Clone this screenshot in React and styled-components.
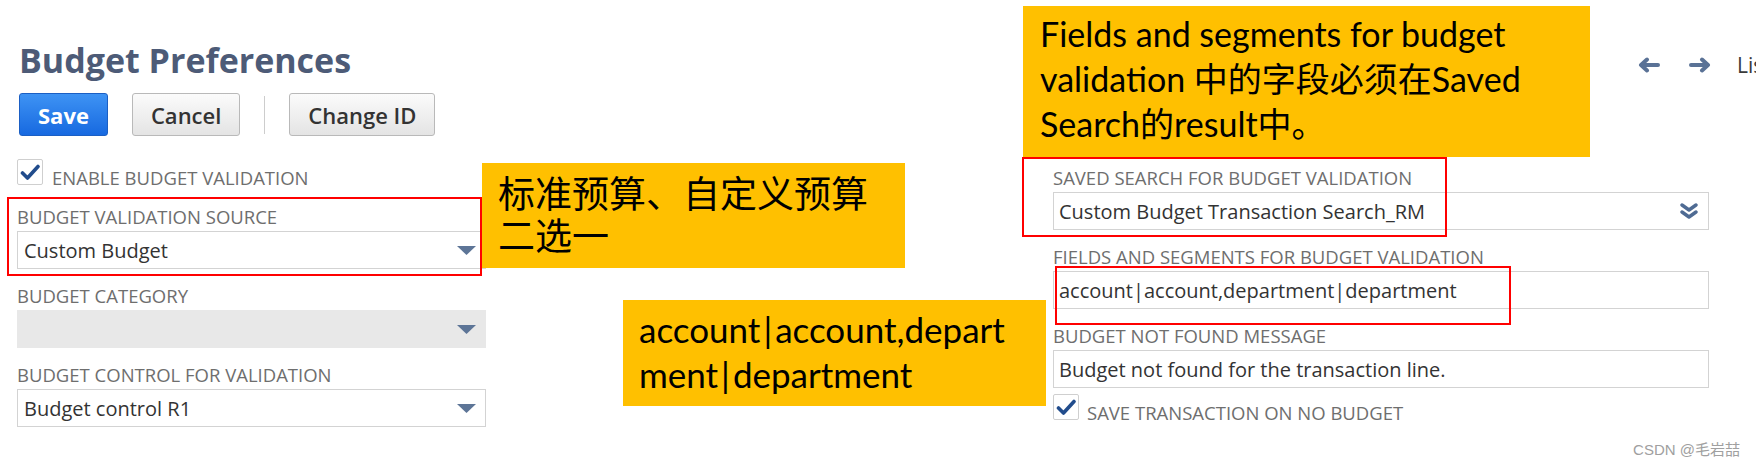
import React from "react";
import styled, { createGlobalStyle } from "styled-components";

const GlobalStyle = createGlobalStyle`
  html, body {
    margin: 0;
    padding: 0;
    background: #fff;
  }
  body {
    font-family: "Open Sans", "Noto Sans CJK SC", sans-serif;
    overflow: hidden;
  }
`;

const Page = styled.div`
  position: relative;
  width: 1756px;
  height: 467px;
  padding-top: 40px;
  box-sizing: border-box;
  overflow: hidden;
`;

const Header = styled.div`
  padding-left: 19px;
`;

const TitleRow = styled.div`
  display: flex;
  align-items: center;
  height: 40px;
`;

const Title = styled.h1`
  flex: none;
  width: 1619px;
  margin: 0;
  font-size: 34px;
  line-height: 40px;
  font-weight: 700;
  color: #4d5b77;
`;

const Nav = styled.div`
  display: flex;
  align-items: center;
  margin-top: 9px;
  white-space: nowrap;
`;

const NavArrow = styled.span`
  display: flex;
  margin-right: ${(p) => p.$gap}px;
`;

const NavLink = styled.span`
  font-size: 21px;
  line-height: 24px;
  color: #3a3a3a;
`;

const ButtonBar = styled.div`
  display: flex;
  align-items: center;
  gap: 24px;
  margin-top: 13px;
`;

const Button = styled.button`
  height: 43px;
  padding: 0 18px;
  box-sizing: border-box;
  border-radius: 3px;
  font-family: "Open Sans", sans-serif;
  font-size: 22px;
  cursor: pointer;
  border: 1px solid ${(p) => (p.$primary ? "#1b5fc4" : "#b9b9b9")};
  color: ${(p) => (p.$primary ? "#fff" : "#333")};
  background: ${(p) =>
    p.$primary
      ? "linear-gradient(#3e93f4, #1769e0)"
      : "linear-gradient(#fbfbfb, #e4e4e4)"};
  font-weight: ${(p) => (p.$primary ? 700 : 600)};
`;

const Divider = styled.span`
  width: 1px;
  height: 38px;
  background: #cdcdcd;
`;

const Columns = styled.div`
  display: grid;
  grid-template-columns: 469px 656px;
  column-gap: 567px;
  align-items: start;
  padding-left: 17px;
  margin-top: 23px;
`;

const Column = styled.div`
  display: flex;
  flex-direction: column;
  padding-top: ${(p) => p.$offset || 0}px;
`;

const CheckRow = styled.label`
  display: flex;
  align-items: flex-end;
  gap: ${(p) => p.$gap}px;
  height: 26px;
  margin-bottom: ${(p) => p.$after || 0}px;
`;

const Box = styled.span`
  flex: none;
  display: flex;
  align-items: center;
  justify-content: center;
  width: 26px;
  height: 26px;
  box-sizing: border-box;
  border: 1px solid #cfcfcf;
  border-radius: 2px;
  background: #fff;
`;

const CheckText = styled.span`
  font-size: 18.5px;
  line-height: 22px;
  margin-bottom: -4px;
  color: #6e6e6e;
  white-space: nowrap;
`;

const Field = styled.div`
  display: flex;
  flex-direction: column;
  gap: 3px;
  margin-bottom: ${(p) => (p.$tight ? 6 : 16)}px;
`;

const FieldLabel = styled.div`
  font-size: 18.5px;
  line-height: 22px;
  color: #6e6e6e;
  white-space: nowrap;
`;

const Control = styled.div`
  display: flex;
  align-items: center;
  justify-content: space-between;
  height: 38px;
  box-sizing: border-box;
  padding: 0 9px 0 ${(p) => p.$pad || 6}px;
  border: 1px solid ${(p) => (p.$disabled ? "#e8e8e8" : "#d3d3d3")};
  background: ${(p) => (p.$disabled ? "#e8e8e8" : "#fff")};
  font-size: 20px;
  color: #333;
  white-space: nowrap;
`;

const Highlight = styled.div`
  position: absolute;
  left: ${(p) => p.$x}px;
  top: ${(p) => p.$y}px;
  width: ${(p) => p.$w}px;
  height: ${(p) => p.$h}px;
  box-sizing: border-box;
  border: 2px solid #f00;
  pointer-events: none;
`;

const Callout = styled.div`
  position: absolute;
  left: ${(p) => p.$x}px;
  top: ${(p) => p.$y}px;
  width: ${(p) => p.$w}px;
  height: ${(p) => p.$h}px;
  box-sizing: border-box;
  padding: ${(p) => p.$padTop}px 0 0 ${(p) => p.$padLeft}px;
  background: #ffc000;
  color: #000;
  font-family: "Lato", "Noto Sans CJK SC", sans-serif;
  font-size: ${(p) => p.$size}px;
  line-height: ${(p) => p.$lh}px;
  white-space: nowrap;
`;

const Pipe = styled.span`
  margin: 0 3px;
`;

const Watermark = styled.div`
  position: absolute;
  right: 16px;
  bottom: 8px;
  font-family: "Liberation Sans", "Noto Sans CJK SC", sans-serif;
  font-size: 15px;
  color: #a0a0a0;
`;

function Check() {
  return (
    <Box>
      <svg width="20" height="17" viewBox="0 0 20 17">
        <path
          d="M2.5 9 L7.5 14 L18 2.5"
          fill="none"
          stroke="#214c8c"
          strokeWidth="3.6"
          strokeLinecap="round"
          strokeLinejoin="round"
        />
      </svg>
    </Box>
  );
}

function Caret() {
  return (
    <svg width="19" height="9" viewBox="0 0 19 9">
      <path d="M0 0 H19 L9.5 9 Z" fill="#5d7597" />
    </svg>
  );
}

function DoubleChevron() {
  return (
    <svg width="20" height="16" viewBox="0 0 20 16">
      <path
        d="M3 2 L10 7 L17 2 M3 9 L10 14 L17 9"
        fill="none"
        stroke="#4f6b93"
        strokeWidth="3.4"
        strokeLinecap="round"
        strokeLinejoin="round"
      />
    </svg>
  );
}

function Arrow({ dir }) {
  const d =
    dir === "left"
      ? "M9 2.5 L3 8 L9 13.5 M3.5 8 H20"
      : "M13 2.5 L19 8 L13 13.5 M18.5 8 H2";
  return (
    <svg width="22" height="16" viewBox="0 0 22 16">
      <path
        d={d}
        fill="none"
        stroke="#5a7296"
        strokeWidth="4"
        strokeLinecap="round"
        strokeLinejoin="round"
      />
    </svg>
  );
}

export default function App() {
  return (
    <Page>
      <GlobalStyle />
      <Header>
        <TitleRow>
          <Title>Budget Preferences</Title>
          <Nav>
            <NavArrow $gap={29}>
              <Arrow dir="left" />
            </NavArrow>
            <NavArrow $gap={26}>
              <Arrow dir="right" />
            </NavArrow>
            <NavLink>List</NavLink>
          </Nav>
        </TitleRow>
        <ButtonBar>
          <Button $primary>Save</Button>
          <Button>Cancel</Button>
          <Divider />
          <Button>Change ID</Button>
        </ButtonBar>
      </Header>

      <Columns>
        <Column>
          <CheckRow $gap={9} $after={21}>
            <Check />
            <CheckText>ENABLE BUDGET VALIDATION</CheckText>
          </CheckRow>
          <Field>
            <FieldLabel>BUDGET VALIDATION SOURCE</FieldLabel>
            <Control>
              Custom Budget
              <Caret />
            </Control>
          </Field>
          <Field>
            <FieldLabel>BUDGET CATEGORY</FieldLabel>
            <Control $disabled>
              <span />
              <Caret />
            </Control>
          </Field>
          <Field>
            <FieldLabel>BUDGET CONTROL FOR VALIDATION</FieldLabel>
            <Control>
              Budget control R1
              <Caret />
            </Control>
          </Field>
        </Column>

        <Column $offset={8}>
          <Field>
            <FieldLabel>SAVED SEARCH FOR BUDGET VALIDATION</FieldLabel>
            <Control $pad={5}>
              Custom Budget Transaction Search_RM
              <DoubleChevron />
            </Control>
          </Field>
          <Field>
            <FieldLabel>FIELDS AND SEGMENTS FOR BUDGET VALIDATION</FieldLabel>
            <Control $pad={5}>account|account,department|department</Control>
          </Field>
          <Field $tight>
            <FieldLabel>BUDGET NOT FOUND MESSAGE</FieldLabel>
            <Control $pad={5}>Budget not found for the transaction line.</Control>
          </Field>
          <CheckRow $gap={8}>
            <Check />
            <CheckText>SAVE TRANSACTION ON NO BUDGET</CheckText>
          </CheckRow>
        </Column>
      </Columns>

      <Highlight $x={7} $y={197} $w={475} $h={79} />
      <Highlight $x={1022} $y={157} $w={425} $h={80} />
      <Highlight $x={1055} $y={266} $w={456} $h={59} />

      <Callout $x={482} $y={163} $w={423} $h={105} $padTop={10} $padLeft={16} $size={37} $lh={42}>
        标准预算、自定义预算
        <br />
        二选一
      </Callout>
      <Callout $x={623} $y={300} $w={423} $h={106} $padTop={7} $padLeft={16} $size={35} $lh={45}>
        account<Pipe>|</Pipe>account,depart
        <br />
        ment<Pipe>|</Pipe>department
      </Callout>
      <Callout $x={1023} $y={6} $w={567} $h={151} $padTop={5} $padLeft={17} $size={34} $lh={45}>
        Fields and segments for budget
        <br />
        validation 中的字段必须在Saved
        <br />
        Search的result中。
      </Callout>

      <Watermark>CSDN @毛岩喆</Watermark>
    </Page>
  );
}
